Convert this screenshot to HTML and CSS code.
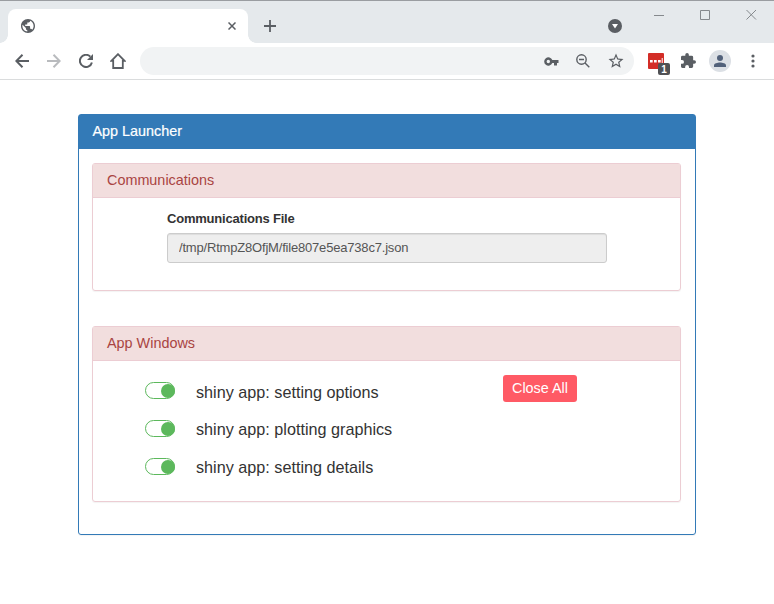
FILE: index.html
```html
<!DOCTYPE html>
<html lang="en">
<head>
<meta charset="utf-8">
<title>App Launcher</title>
<link rel="stylesheet" href="styles.css">
</head>
<body>
<header class="tabstrip">
  <div class="tab">
    <svg class="globe" viewBox="2 2 20 20"><path fill="#5a5e63" d="M12 2C6.480 2 2 6.480 2 12s4.480 10 10 10 10-4.480 10-10S17.520 2 12 2zm-1 17.930c-3.950-.49-7-3.850-7-7.930 0-.62.08-1.210.21-1.790L9 15v1c0 1.100.9 2 2 2v1.930zm6.900-2.540c-.26-.81-1-1.390-1.900-1.390h-1v-3c0-.55-.45-1-1-1H8v-2h2c.55 0 1-.45 1-1V7h2c1.100 0 2-.9 2-2v-.41c2.930 1.190 5 4.060 5 7.410 0 2.080-.8 3.970-2.100 5.390z"/></svg>
    <svg class="tab-close" viewBox="0 0 8 8"><path d="M.5.5l7 7M7.500.5l-7 7" stroke="#5a5e63" stroke-width="1.500"/></svg>
  </div>
  <svg class="new-tab" viewBox="0 0 12 12"><path d="M6 0v12M0 6h12" stroke="#5a5e63" stroke-width="1.800"/></svg>
  <svg class="tab-search" viewBox="0 0 14 14"><circle cx="7" cy="7" r="7" fill="#5a5e63"/><path d="M4 5h6L7 9.500z" fill="#fff"/></svg>
  <div class="window-buttons">
    <svg viewBox="0 0 11 11"><path d="M0 5.500h10" stroke="#85898d"/></svg>
    <svg viewBox="0 0 11 11"><path d="M.5.5h9v9H.5z" fill="none" stroke="#85898d"/></svg>
    <svg viewBox="0 0 11 11"><path d="M.5 0l9.500 9.500M10 0L.5 9.500" stroke="#85898d"/></svg>
  </div>
</header>
<nav class="toolbar">
  <svg class="nav-icon" viewBox="0 0 14 14"><path d="M14 7H1.500M7.500.8L1.300 7l6.200 6.200"/></svg>
  <svg class="nav-icon disabled" viewBox="0 0 14 14"><path d="M0 7h12.500M6.500.8L12.700 7l-6.200 6.200"/></svg>
  <svg class="nav-icon" viewBox="0 0 14 14"><path d="M12.900 8.500A6.100 6.100 0 1 1 11.300 2.600"/><path class="solid" d="M14 0v6H8z"/></svg>
  <svg class="nav-icon home" viewBox="0 0 16 16"><path d="M8 1.200L1.500 7.800H3.200V15h9.600V7.800h1.700z"/></svg>
  <div class="omnibox">
    <svg class="key" viewBox="0 0 15 9"><path d="M8.300 3A4.200 4.200 0 1 0 8.300 6H10v2.500h3V6h1.500V3zM4.300 6.200a1.700 1.700 0 1 1 0-3.400 1.700 1.700 0 0 1 0 3.400z"/></svg>
    <svg class="lens" viewBox="0 0 14 14"><circle cx="5.500" cy="5.500" r="4.700"/><path d="M9 9l4.300 4.300M3 5.500h5"/></svg>
    <svg class="star" viewBox="0 0 24 24"><path d="M22 9.240l-7.190-.62L12 2 9.190 8.630 2 9.240l5.460 4.730L5.820 21 12 17.270 18.180 21l-1.630-7.030L22 9.240zM12 15.400l-3.760 2.270 1-4.280-3.320-2.880 4.380-.38L12 6.100l1.710 4.040 4.380.38-3.320 2.880 1 4.280L12 15.400z"/></svg>
  </div>
  <div class="extension">
    <svg viewBox="0 0 16 16"><rect width="16" height="16" rx="1" fill="#d32d27"/><path d="M2 7h2.700v2.500H2zM6 7h2.700v2.500H6zM10 7h2.700v2.500H10zM13.700 5h1v5h-1z" fill="#fff"/></svg>
    <span class="badge">1</span>
  </div>
  <svg class="puzzle" viewBox="2 1 21 21"><path d="M20.500 11H19V7a2 2 0 0 0-2-2h-4V3.500a2.500 2.500 0 0 0-5 0V5H4a2 2 0 0 0-2 2v3.800h1.500a2.700 2.700 0 0 1 0 5.400H2V20a2 2 0 0 0 2 2h3.800v-1.500a2.700 2.700 0 0 1 5.400 0V22H17a2 2 0 0 0 2-2v-4h1.500a2.500 2.500 0 0 0 0-5z"/></svg>
  <div class="avatar"><svg viewBox="0 0 12 12"><circle cx="6" cy="3" r="3"/><path d="M0 12V10.300C0 8.300 3.500 7.400 6 7.400s6 .9 6 2.900V12z"/></svg></div>
  <svg class="more" viewBox="0 0 4 14"><circle cx="2" cy="2" r="1.600"/><circle cx="2" cy="7" r="1.600"/><circle cx="2" cy="12" r="1.600"/></svg>
</nav>
<main class="panel launcher">
  <h1 class="panel-heading">App Launcher</h1>
  <div class="panel-body">
    <section class="panel danger communications">
      <h2 class="panel-heading">Communications</h2>
      <div class="field">
        <label for="file">Communications File</label>
        <input id="file" type="text" value="/tmp/RtmpZ8OfjM/file807e5ea738c7.json" readonly>
      </div>
    </section>
    <section class="panel danger windows">
      <h2 class="panel-heading">App Windows</h2>
      <div class="windows-body">
        <ul class="apps">
          <li><span class="switch"></span><span class="app-name">shiny app: setting options</span></li>
          <li><span class="switch"></span><span class="app-name raised">shiny app: plotting graphics</span></li>
          <li><span class="switch"></span><span class="app-name raised">shiny app: setting details</span></li>
        </ul>
        <button class="close-all" type="button">Close All</button>
      </div>
    </section>
  </div>
</main>
</body>
</html>
```
FILE: styles.css
```css
* { box-sizing: border-box; }
body {
  margin: 0;
  height: 604px;
  overflow: hidden;
  background: #fff;
  color: #333;
  font-family: "Liberation Sans", Arial, sans-serif;
}
svg { display: block; flex: none; }
.tabstrip {
  display: flex;
  height: 43px;
  padding-left: 8px;
  background: #e5e9ec;
  border-top: 1px solid #9a9da1;
}
.tab {
  position: relative;
  display: flex;
  align-items: center;
  justify-content: space-between;
  width: 240px;
  height: 34px;
  margin-top: 8px;
  padding: 0 12px 0 13px;
  background: #fff;
  border-radius: 8px 8px 0 0;
}
.tab::before, .tab::after {
  content: "";
  position: absolute;
  bottom: 0;
  width: 8px;
  height: 8px;
}
.tab::before { left: -8px; background: radial-gradient(circle at 0 0, transparent 7.5px, #fff 8px); }
.tab::after { right: -8px; background: radial-gradient(circle at 100% 0, transparent 7.5px, #fff 8px); }
.globe { width: 14px; height: 14px; }
.tab-close { width: 8px; height: 8px; }
.new-tab { width: 12px; height: 12px; margin: 19px 0 0 16px; }
.tab-search { width: 14px; height: 14px; margin: 18px 0 0 332px; }
.window-buttons { display: flex; gap: 35px; margin: 9px 0 0 32px; }
.window-buttons svg { width: 11px; height: 11px; }
.toolbar {
  display: flex;
  align-items: center;
  height: 37px;
  padding-left: 15px;
  border-bottom: 1px solid #dadcdd;
  fill: #5a5e63;
}
.nav-icon {
  width: 14px;
  height: 14px;
  margin-right: 18px;
  fill: none;
  stroke: #5a5e63;
  stroke-width: 2;
}
.nav-icon .solid { fill: #5a5e63; stroke: none; }
.disabled { stroke: #b9bbbe; }
.home { width: 16px; height: 16px; margin: 0 14px 0 -1px; stroke-width: 1.8; }
.omnibox {
  display: flex;
  align-items: center;
  justify-content: flex-end;
  width: 494px;
  height: 28px;
  padding-right: 9px;
  border-radius: 14px;
  background: #f1f3f4;
}
.key { width: 15px; height: 9px; margin-right: 17px; }
.lens {
  width: 14px;
  height: 14px;
  margin-right: 17px;
  fill: none;
  stroke: #5a5e63;
  stroke-width: 1.4;
}
.star { width: 18px; height: 18px; }
.extension { position: relative; margin-left: 14px; }
.extension svg { width: 16px; height: 16px; }
.badge {
  position: absolute;
  left: 10px;
  top: 10px;
  width: 12px;
  height: 12px;
  border-radius: 2px;
  background: #505154;
  color: #fff;
  font: bold 10px/13px "Liberation Sans", sans-serif;
  text-align: center;
}
.puzzle { width: 15px; height: 15px; margin: 0 0 1px 17px; }
.avatar {
  display: grid;
  place-items: center;
  width: 22px;
  height: 22px;
  margin-left: 13px;
  border-radius: 50%;
  background: #dce0e5;
  fill: #52617a;
}
.avatar svg { width: 12px; height: 12px; }
.more { width: 4px; height: 14px; margin-left: 19.5px; }
.panel {
  border: 1px solid #eccdd3;
  border-radius: 3px;
  box-shadow: 0 1px 1px rgba(0, 0, 0, .05);
}
.panel-heading {
  height: 34px;
  margin: 0;
  padding-left: 14px;
  font-size: 14.4px;
  font-weight: 400;
  line-height: 33px;
}
.launcher {
  width: 618px;
  height: 421px;
  margin: 34px 0 0 78px;
  border-color: #337ab7;
}
.launcher > .panel-heading { padding-left: 13.5px; background: #337ab7; color: #fff; -webkit-text-stroke: .2px #fff; }
.panel-body { padding: 14px 14px 0 13px; }
.danger .panel-heading {
  border-bottom: 1px solid #eccdd3;
  background: #f2dede;
  color: #a94442;
}
.communications { height: 128px; margin-bottom: 35px; }
.windows { height: 176px; }
.field { display: flex; flex-direction: column; width: 440px; margin: 12px 0 0 74px; }
.field label { height: 23px; font-size: 13px; font-weight: 700; letter-spacing: -.21px; line-height: 18px; }
.field input {
  height: 30px;
  padding: 0 11px 2px;
  border: 1px solid #ccc;
  border-radius: 3px;
  background: #eee;
  box-shadow: inset 0 1px 1px rgba(0, 0, 0, .075);
  color: #555;
  font: 13px "Liberation Sans", sans-serif;
  letter-spacing: -.19px;
}
.windows-body { display: flex; padding-top: 14px; }
.apps { width: 410px; margin: 0; padding: 0 0 0 52px; list-style: none; }
.apps li { display: flex; align-items: flex-start; height: 38px; }
.switch {
  position: relative;
  width: 30px;
  height: 17px;
  margin-top: 7px;
  border: 1px solid #5cb85c;
  border-radius: 9px;
}
.switch::after {
  content: "";
  position: absolute;
  right: -1px;
  top: 1px;
  width: 14px;
  height: 14px;
  border-radius: 50%;
  background: #5cb85c;
}
.app-name { margin: 8px 0 0 21px; font-size: 16.200px; line-height: 19px; }
.raised { margin-top: 7px; }
.close-all {
  width: 74px;
  height: 27px;
  padding: 0 0 2px;
  border: 0;
  border-radius: 3px;
  background: #ff5a65;
  color: #fff;
  font: 14.400px "Liberation Sans", sans-serif;
}
```
